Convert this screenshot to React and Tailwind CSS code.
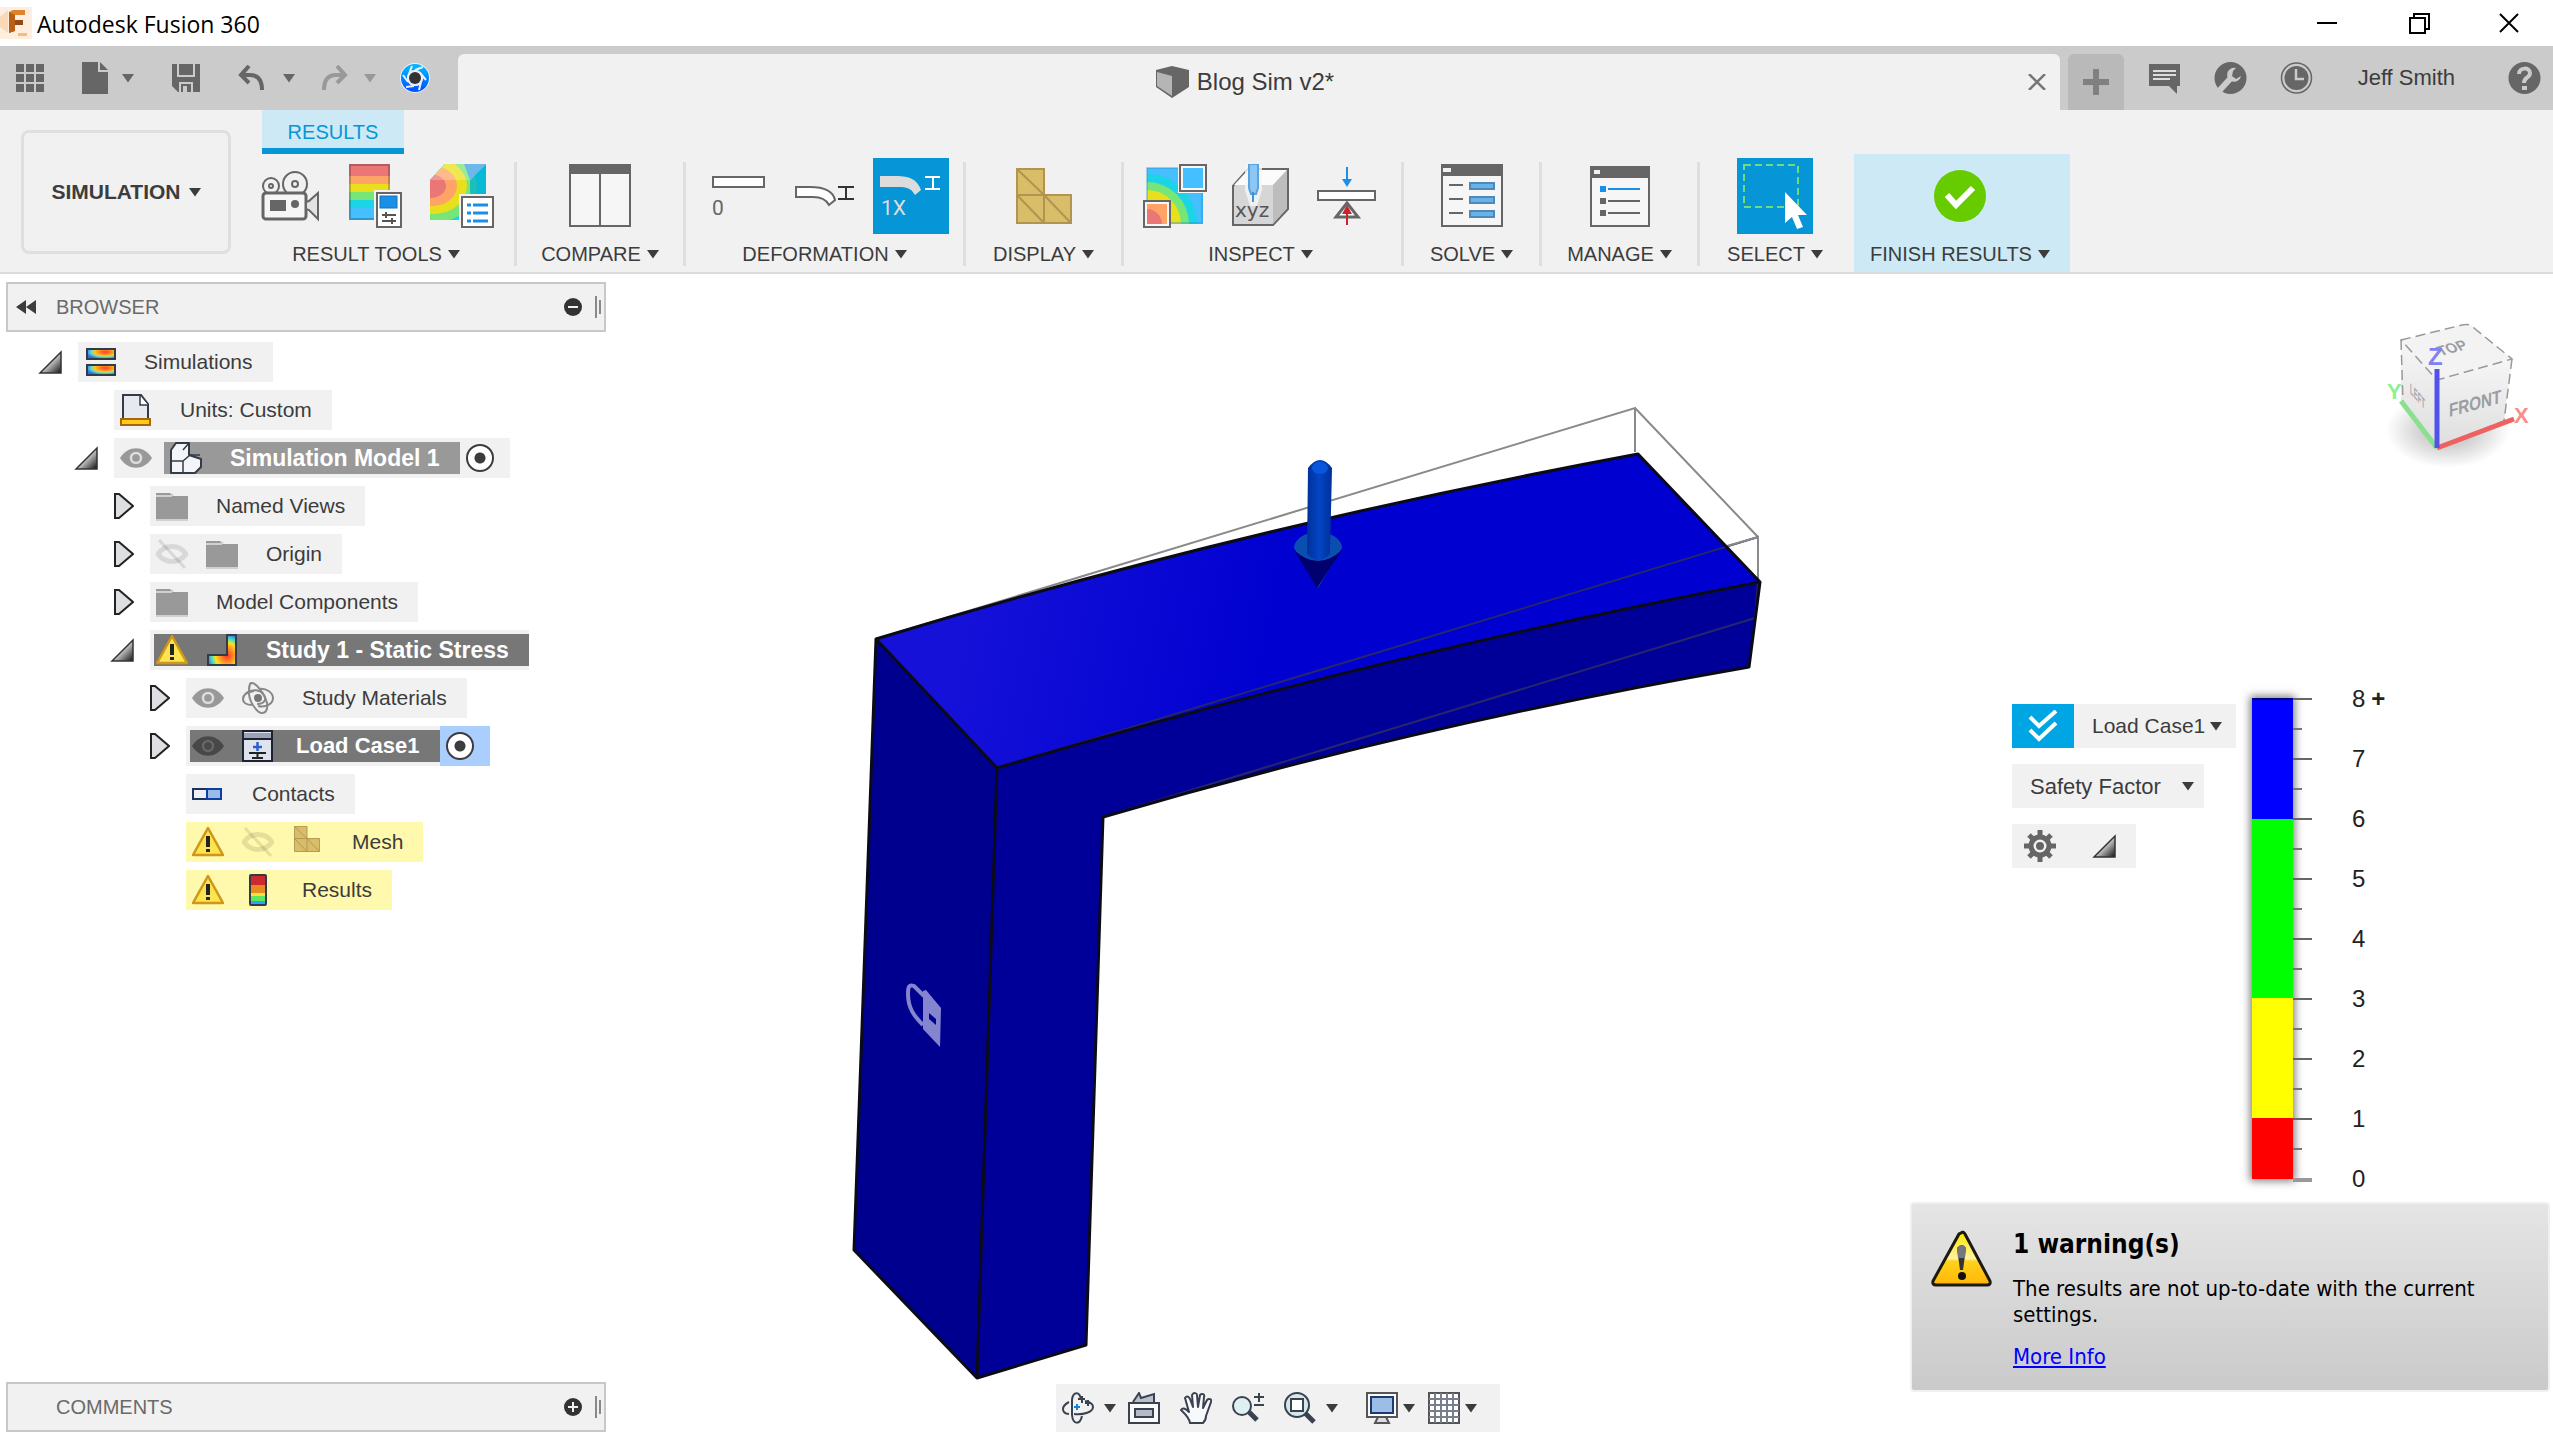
import React from 'react';

const Caret = ({ className = 'text-[#3c3c3c]' }) => (
  <svg className={`shrink-0 ${className}`} width="12" height="10" viewBox="0 0 12 10" fill="currentColor" aria-hidden="true">
    <path d="M0 1h12L6 9.500z" />
  </svg>
);

/* ---------- title bar ---------- */

const TitleBar = () => (
  <header className="flex h-[46px] items-center justify-between bg-white font-['Open_Sans',sans-serif]">
    <div className="flex items-center gap-[5px]">
      <svg width="32" height="32" viewBox="0 0 32 32" aria-hidden="true">
        <rect width="32" height="32" fill="#fdeee0" />
        <path d="M0 10L8 3v23l-8-6z" fill="#f9d9b8" />
        <path d="M9 5l4-2h12v5H15v5h8v5h-8v6l-6 2z" fill="#e0812b" />
        <path d="M9 5l6 3v16l-6 2z" fill="#b85f17" />
        <path d="M15 13h8v5h-8z" fill="#8f4a17" />
        <path d="M18 26h9v3h-9z" fill="#fbb97a" />
      </svg>
      <h1 className="pt-[2px] text-[23px] leading-[44px] text-black">Autodesk Fusion 360</h1>
    </div>
    <div className="flex h-full">
      <button type="button" aria-label="Minimize" className="flex w-[92px] items-center justify-center">
        <svg width="20" height="20" viewBox="0 0 20 20"><path d="M0 10h20" stroke="#000" strokeWidth="2" /></svg>
      </button>
      <button type="button" aria-label="Restore" className="flex w-[92px] items-center justify-center">
        <svg width="21" height="21" viewBox="0 0 21 21" fill="none" stroke="#000" strokeWidth="2">
          <path d="M1 5h15v15H1zM5 5V1h15v15h-4" />
        </svg>
      </button>
      <button type="button" aria-label="Close" className="flex w-[88px] items-center justify-center">
        <svg width="20" height="20" viewBox="0 0 20 20"><path d="M1 1l18 18M19 1L1 19" stroke="#000" strokeWidth="2" /></svg>
      </button>
    </div>
  </header>
);

/* ---------- quick access + document tab ---------- */

const QuickAccess = () => (
  <div className="flex w-[458px] items-center pl-4 text-[#666]">
    <button type="button" aria-label="Data panel" className="mr-[38px]">
      <svg width="28" height="28" viewBox="0 0 28 28" fill="currentColor">
        <path d="M0 0h8v8H0zM10 0h8v8h-8zM20 0h8v8h-8zM0 10h8v8H0zM10 10h8v8h-8zM20 10h8v8h-8zM0 20h8v8H0zM10 20h8v8h-8zM20 20h8v8h-8z" />
      </svg>
    </button>
    <button type="button" aria-label="File" className="mr-[38px] flex items-center gap-[14px]">
      <svg width="26" height="32" viewBox="0 0 26 32" fill="currentColor">
        <path d="M0 0h16v10h10v22H0zM18 0l8 8h-8z" />
      </svg>
      <Caret className="text-[#666]" />
    </button>
    <button type="button" aria-label="Save" className="mr-[38px]">
      <svg width="28" height="28" viewBox="0 0 28 28">
        <path d="M0 0h28v28H6l-6-6z" fill="currentColor" />
        <path d="M6 0v12h16V0M8 28v-9h12v9" fill="none" stroke="#cbcbcb" strokeWidth="2" />
        <path d="M11 22h4v6h-4z" fill="#cbcbcb" />
      </svg>
    </button>
    <button type="button" aria-label="Undo" className="mr-[26px] flex items-center gap-[18px]">
      <svg width="27" height="26" viewBox="0 0 27 26" fill="none" stroke="currentColor" strokeWidth="4">
        <path d="M11 1L3 10l8 8M3 10h9c8 0 12 5 12 15" />
      </svg>
      <Caret className="text-[#666]" />
    </button>
    <button type="button" aria-label="Redo" className="mr-6 flex items-center gap-4 text-[#999]">
      <svg width="27" height="26" viewBox="0 0 27 26" fill="none" stroke="currentColor" strokeWidth="4">
        <path d="M16 1l8 9-8 8M24 10h-9C7 10 3 15 3 25" />
      </svg>
      <Caret className="text-[#999]" />
    </button>
    <button type="button" aria-label="Job status">
      <svg width="30" height="32" viewBox="0 0 30 32">
        <defs>
          <linearGradient id="ring" x1="0" y1="0" x2="0" y2="1">
            <stop offset="0" stopColor="#00b4ff" />
            <stop offset="1" stopColor="#0055ff" />
          </linearGradient>
        </defs>
        <circle cx="15" cy="16" r="15" fill="#e6f2fb" />
        <circle cx="15" cy="16" r="11" fill="none" stroke="url(#ring)" strokeWidth="6" />
        <g stroke="#e6f2fb" strokeWidth="2">
          <path d="M15 8l8-3M21 12l5 6M21 20l-2 8M14 24l-8 1M8 20l-5-7M9 12l3-8" />
        </g>
        <circle cx="15" cy="16" r="8" fill="#e6f2fb" />
        <circle cx="15" cy="16" r="6" fill="#333" />
      </svg>
    </button>
  </div>
);

const TabBar = () => (
  <div className="flex h-16 bg-[#cbcbcb] font-['Liberation_Sans',Arial,sans-serif]">
    <QuickAccess />
    <div className="relative mt-2 flex flex-1 items-center justify-center rounded-t-md bg-[#f1f1f1]">
      <div className="-ml-7 flex items-center gap-2">
        <svg width="33" height="32" viewBox="0 0 33 32">
          <path d="M0 4L16 0l17 4v17L16 32 0 21z" fill="#666" />
          <path d="M1 6l15 4v20L1 20z" fill="#b3b6b5" />
        </svg>
        <span className="text-[24px] leading-8 text-[#3c3c3c]">Blog Sim v2*</span>
      </div>
      <button type="button" aria-label="Close document" className="absolute right-[14px] top-5">
        <svg width="18" height="16" viewBox="0 0 18 16"><path d="M1 0l16 16M17 0L1 16" stroke="#777" strokeWidth="2.500" /></svg>
      </button>
    </div>
    <button type="button" aria-label="New document" className="ml-2 mt-2 flex w-14 items-center justify-center rounded-t-md bg-[#b9b9b9]">
      <svg width="26" height="26" viewBox="0 0 26 26"><path d="M13 0v26M0 13h26" stroke="#808080" strokeWidth="6" /></svg>
    </button>
    <div className="flex w-[429px] items-center justify-between pl-6 pr-3 text-[#666]">
      <button type="button" aria-label="Notifications">
        <svg width="33" height="32" viewBox="0 0 33 32">
          <path d="M1 2h31v22h-3v8l-8-8H1z" fill="currentColor" />
          <path d="M5 9h23M5 13h23M5 17h17" stroke="#dcdcdc" strokeWidth="2" />
        </svg>
      </button>
      <button type="button" aria-label="Extensions">
        <svg width="33" height="32" viewBox="0 0 33 32">
          <circle cx="16.500" cy="16" r="16" fill="currentColor" />
          <path d="M5 29l11-12" stroke="#cbcbcb" strokeWidth="6" />
          <path d="M22 6a7 7 0 1 0 5 8l-5 3-4-3 1-5z" fill="#cbcbcb" />
        </svg>
      </button>
      <button type="button" aria-label="Recent">
        <svg width="33" height="32" viewBox="0 0 33 32">
          <circle cx="16.500" cy="16" r="15" fill="#cbcbcb" stroke="currentColor" strokeWidth="1.500" />
          <circle cx="16.500" cy="16" r="12" fill="currentColor" />
          <path d="M16 7v10h8" fill="none" stroke="#cbcbcb" strokeWidth="2.500" />
        </svg>
      </button>
      <a href="#account" className="ml-3 mr-5 text-[22px] leading-8 text-[#3c3c3c]">Jeff Smith</a>
      <button type="button" aria-label="Help">
        <svg width="33" height="32" viewBox="0 0 33 32">
          <circle cx="16.500" cy="16" r="16" fill="currentColor" />
          <path d="M11 12c0-7 11-7 11-1 0 5-6 4-6 10" fill="none" stroke="#cbcbcb" strokeWidth="4" />
          <path d="M14 24h5v4h-5z" fill="#cbcbcb" />
        </svg>
      </button>
    </div>
  </div>
);

/* ---------- ribbon icons ---------- */

const CameraIcon = () => (
  <svg width="58" height="64" viewBox="0 0 58 64" fill="none" stroke="#666" strokeWidth="2">
    <circle cx="10" cy="22" r="8" /><circle cx="10" cy="22" r="2" />
    <circle cx="34" cy="20" r="12" /><circle cx="34" cy="20" r="3" />
    <rect x="2" y="29" width="43" height="26" rx="3" fill="#f6f6f6" strokeWidth="3" />
    <path d="M45 38l3-1 9-8v26l-9-9-3-1z" fill="#e2e2e2" />
    <rect x="9" y="36" width="16" height="11" fill="#666" stroke="none" />
    <circle cx="34" cy="40" r="4" fill="#666" stroke="none" />
  </svg>
);

const LegendIcon = () => (
  <svg width="54" height="64" viewBox="0 0 54 64">
    <rect width="41" height="12" fill="#eb7676" />
    <rect y="12" width="41" height="8" fill="#ffa366" />
    <rect y="20" width="41" height="8" fill="#e8e01c" />
    <rect y="28" width="41" height="8" fill="#76e676" />
    <rect y="36" width="41" height="8" fill="#1cd4e6" />
    <rect y="44" width="41" height="12" fill="#45bfff" />
    <rect x="1" y="1" width="39" height="54" fill="none" stroke="#000" strokeOpacity=".22" strokeWidth="2" />
    <rect x="25" y="26" width="29" height="38" fill="#f1f1f1" />
    <rect x="28" y="29" width="24" height="34" fill="#fff" stroke="#666" strokeWidth="2" />
    <rect x="31" y="32" width="17" height="12" fill="#1a8fe8" stroke="#1473bd" />
    <path d="M33 51h14M33 57h14M37 48v6M43 54v6" stroke="#555" strokeWidth="2" />
  </svg>
);

const SurfaceIcon = () => (
  <svg width="64" height="64" viewBox="0 0 64 64">
    <clipPath id="surf"><path d="M0 16L15 0h41v40L40 56H0z" /></clipPath>
    <g clipPath="url(#surf)">
      <rect width="56" height="56" fill="#1cd4e6" />
      <ellipse cx="6" cy="22" rx="41" ry="36" fill="#76e676" />
      <ellipse cx="4" cy="22" rx="33" ry="28" fill="#e8e01c" />
      <ellipse cx="2" cy="22" rx="25" ry="20" fill="#ffa366" />
      <ellipse cx="0" cy="22" rx="16" ry="12" fill="#eb7676" />
      <path d="M40 16L56 0v56H40z" fill="#00b0cf" fillOpacity=".75" />
      <path d="M0 16L15 0h41L40 16z" fill="#fff" fillOpacity=".25" />
      <path d="M56 0L40 16 34 0z" fill="#6db8ea" />
    </g>
    <rect x="29" y="30" width="35" height="34" fill="#f1f1f1" />
    <rect x="32" y="33" width="31" height="30" fill="#fff" stroke="#666" strokeWidth="2" />
    <path d="M43 41h15M43 49h15M43 57h15M37 41h4M37 49h4M37 57h4" stroke="#1a8fe8" strokeWidth="3" />
  </svg>
);

const CompareIcon = () => (
  <svg width="62" height="64" viewBox="0 0 62 64">
    <rect x="1" y="1" width="60" height="61" fill="#f6f6f6" stroke="#666" strokeWidth="2" />
    <path d="M0 0h62v10H0zM30 10h2v52h-2z" fill="#666" />
  </svg>
);

const UndeformedIcon = () => (
  <svg width="54" height="64" viewBox="0 0 54 64">
    <rect x="1" y="13" width="51" height="10" fill="#fff" stroke="#666" strokeWidth="2" />
    <text x="0" y="51" fontSize="21" fill="#666" fontFamily="Roboto, sans-serif">0</text>
  </svg>
);

const DeformedIcon = () => (
  <svg width="62" height="64" viewBox="0 0 62 64" fill="none" stroke="#666" strokeWidth="2">
    <path d="M2 23h14c14 0 23 4 25 13l-6 5c-3-6-8-8-16-8H2z" fill="#fff" />
    <path d="M44 23h16M44 35h16M52 23v12" stroke="#333" />
  </svg>
);

const ActualIcon = () => (
  <svg width="64" height="64" viewBox="0 0 64 64">
    <path d="M1 12h17c12 0 20 3 24 14l-6 5c-4-7-8-8-17-8H1z" fill="#dcdcdc" />
    <path d="M46 13h15M46 25h15M54 13v12" stroke="#fff" strokeWidth="2" />
    <text x="2" y="51" fontSize="21" fill="#dcdcdc" fontFamily="Roboto, sans-serif">1X</text>
  </svg>
);

const MeshIcon = ({ size = 56 }) => (
  <svg width={size} height={size} viewBox="0 0 56 56" fill="#d9bd69" stroke="#b09550" strokeWidth="2">
    <path d="M1 1h27v26h27v28H1z" />
    <path d="M1 27h27v28M1 1l27 26M1 27l27 28M28 27l27 28" />
  </svg>
);

const ProbeAreaIcon = () => (
  <svg width="64" height="64" viewBox="0 0 64 64">
    <clipPath id="area"><rect x="4" y="4" width="56" height="56" /></clipPath>
    <g clipPath="url(#area)">
      <rect width="64" height="64" fill="#45bfff" />
      <circle cx="4" cy="60" r="50" fill="#1cd4e6" />
      <circle cx="4" cy="60" r="42" fill="#76e676" />
      <circle cx="4" cy="60" r="34" fill="#e8e01c" />
    </g>
    <rect x="4" y="4" width="55" height="55" fill="none" stroke="#2590cc" strokeOpacity=".5" strokeWidth="1.500" />
    <rect x="35" y="0" width="29" height="29" fill="#f6f6f6" />
    <rect x="37" y="1" width="26" height="26" fill="#f6f6f6" stroke="#666" strokeWidth="2" />
    <rect x="40" y="4" width="20" height="20" fill="#45bfff" />
    <rect x="1" y="37" width="26" height="26" fill="#f6f6f6" stroke="#666" strokeWidth="2" />
    <rect x="4" y="40" width="20" height="20" fill="#ffa366" />
    <path d="M4 60V45c8 0 15 7 15 15z" fill="#eb7676" />
  </svg>
);

const PointIcon = () => (
  <svg width="58" height="64" viewBox="0 0 58 64">
    <path d="M1 22L16 5h40v40L41 61H1z" fill="#d6d6d6" stroke="#666" strokeWidth="2" />
    <path d="M2 21L16 6h39L41 21z" fill="#fbfbfb" />
    <path d="M41 21L55 6v38L41 60z" fill="#bdbdbd" />
    <path d="M13 0h17v26l-5 16h-7l-5-16z" fill="#f6f6f6" fillOpacity=".8" />
    <path d="M17 0h9v24l-2 6h-5l-2-6z" fill="#8cc6f5" stroke="#5aa3dc" strokeWidth="2" />
    <path d="M21 28v10" stroke="#3f93d6" strokeWidth="2" />
    <text x="3" y="53" fontSize="20" fill="#555" fontFamily="DejaVu Sans, sans-serif">xyz</text>
  </svg>
);

const ReactionIcon = () => (
  <svg width="60" height="64" viewBox="0 0 60 64">
    <rect x="1" y="27" width="57" height="9" fill="#fff" stroke="#666" strokeWidth="2" />
    <path d="M30 39l11 14H19z" fill="#fff" stroke="#666" strokeWidth="3" />
    <path d="M30 3v14" stroke="#1a8fe8" strokeWidth="2" /><path d="M25 15h10l-5 8z" fill="#1a8fe8" />
    <path d="M30 47v14" stroke="#cc2229" strokeWidth="2" /><path d="M25 50h10l-5-9z" fill="#cc2229" />
  </svg>
);

const SolveIcon = () => (
  <svg width="62" height="64" viewBox="0 0 62 64">
    <rect x="1" y="1" width="60" height="61" fill="#f6f6f6" stroke="#666" strokeWidth="2" />
    <path d="M0 0h62v12H0z" fill="#666" />
    <path d="M2 4h8v4H2z" fill="#f1f1f1" />
    <path d="M8 21h14M8 35h14M8 49h14" stroke="#666" strokeWidth="2" />
    <g fill="#68b3ec" stroke="#5089b5" strokeWidth="2">
      <rect x="29" y="19" width="24" height="6" /><rect x="29" y="33" width="24" height="6" /><rect x="29" y="47" width="24" height="6" />
    </g>
  </svg>
);

const ManageIcon = () => (
  <svg width="60" height="64" viewBox="0 0 60 64">
    <rect x="1" y="3" width="58" height="59" fill="#f6f6f6" stroke="#666" strokeWidth="2" />
    <path d="M0 2h60v12H0z" fill="#666" />
    <path d="M4 6h6v4H4z" fill="#f1f1f1" />
    <path d="M18 25h32" stroke="#1a8fe8" strokeWidth="2" /><path d="M10 22h6v6h-6z" fill="#1a8fe8" />
    <path d="M18 37h32M18 49h32" stroke="#666" strokeWidth="2" /><path d="M10 34h6v6h-6zM10 46h6v6h-6z" fill="#666" />
  </svg>
);

const SelectIcon = () => (
  <svg width="68" height="68" viewBox="0 0 68 68">
    <path d="M3 3h54v42H3z" fill="none" stroke="#6fdc7c" strokeWidth="2" strokeDasharray="7 4" />
    <path d="M44 30v31l7-6 5 12 6-2-5-12h9z" fill="#fff" />
  </svg>
);

const FinishIcon = () => (
  <svg width="52" height="52" viewBox="0 0 52 52">
    <circle cx="26" cy="26" r="26" fill="#66cc00" />
    <path d="M13 25l9 10 17-17" fill="none" stroke="#fff" strokeWidth="6" />
  </svg>
);

const ribbonGroups = [
  { name: 'RESULT TOOLS', width: 'w-[260px] mr-2', tools: [['Animate', CameraIcon], ['Legend options', LegendIcon], ['Surface results', SurfaceIcon]] },
  { name: 'COMPARE', width: 'w-[166px]', tools: [['Compare', CompareIcon]] },
  { name: 'DEFORMATION', width: 'w-[277px]', tools: [['Undeformed', UndeformedIcon], ['Adjusted', DeformedIcon], ['Actual', ActualIcon, true]] },
  { name: 'DISPLAY', width: 'w-[155px]', tools: [['Mesh', MeshIcon]] },
  { name: 'INSPECT', width: 'w-[273px] mr-1', tools: [['Surface probes', ProbeAreaIcon], ['Point probes', PointIcon], ['Reactions', ReactionIcon]] },
  { name: 'SOLVE', width: 'w-[135px]', tools: [['Solve', SolveIcon]] },
  { name: 'MANAGE', width: 'w-[155px]', tools: [['Manage', ManageIcon]] },
  { name: 'SELECT', width: 'w-[150px] mr-1', tools: [['Select', SelectIcon, true]] },
  { name: 'FINISH RESULTS', width: 'w-[216px] pr-1', tools: [['Finish results', FinishIcon]], finish: true },
];

const Ribbon = () => (
  <div className="flex h-[164px] border-b-2 border-[#dcdcdc] bg-[#f1f1f1] pl-[21px] font-['Liberation_Sans',Arial,sans-serif]">
    <button
      type="button"
      className="mt-5 flex h-[124px] w-[210px] items-center justify-center gap-2 rounded-lg border-3 border-[#dfdfdf] text-[21px] font-bold text-[#3c3c3c]"
    >
      SIMULATION
      <Caret />
    </button>
    <div className="ml-[15px] flex flex-1 flex-col">
      <div className="flex h-11 pl-4">
        <button type="button" className="w-[142px] border-b-6 border-[#0696d7] bg-[#cce9f5] pt-[6px] text-[20px] leading-8 text-[#0696d7]">
          RESULTS
        </button>
      </div>
      <div className="flex">
        {ribbonGroups.map((group, index) => (
          <React.Fragment key={group.name}>
            {index > 0 && !group.finish && <div className="mt-2 h-[104px] w-[3px] bg-[#dfdfdf]" />}
            <section className={`flex h-[118px] flex-col items-center ${group.width} ${group.finish ? 'bg-[#cce9f5]' : ''}`}>
              <div className="mt-1 flex h-[76px] gap-[10px]">
                {group.tools.map(([label, Icon, active]) => (
                  <button
                    key={label}
                    type="button"
                    aria-label={label}
                    className={`flex w-[76px] items-center justify-center ${active ? 'bg-[#0696d7]' : ''}`}
                  >
                    <Icon />
                  </button>
                ))}
              </div>
              <button type="button" className="mt-2 flex items-center gap-[6px] text-[20px] leading-6 text-[#3c3c3c]">
                {group.name}
                <Caret />
              </button>
            </section>
          </React.Fragment>
        ))}
      </div>
    </div>
  </div>
);

/* ---------- browser tree ---------- */

const Expanded = () => (
  <svg width="24" height="24" viewBox="0 0 24 24">
    <defs>
      <linearGradient id="tri" x1="0" y1="0" x2="1" y2="1">
        <stop offset=".35" stopColor="#fff" />
        <stop offset="1" stopColor="#111" />
      </linearGradient>
    </defs>
    <path d="M2 23L23 2v21z" fill="url(#tri)" stroke="#333" strokeWidth="1.500" />
  </svg>
);

const Collapsed = () => (
  <svg width="20" height="26" viewBox="0 0 20 26">
    <path d="M1 1h4l14 12L5 25H1z" fill="#dedfe2" stroke="#222" strokeWidth="2" />
  </svg>
);

const Eye = ({ color = '#999', hole = '#ddd' }) => (
  <svg width="32" height="32" viewBox="0 0 32 32">
    <path d="M0 16C8 3 24 3 32 16 24 29 8 29 0 16z" fill={color} />
    <circle cx="16" cy="16" r="5" fill={color} stroke={hole} strokeWidth="2.500" />
  </svg>
);

const EyeOff = () => (
  <svg width="32" height="32" viewBox="0 0 32 32" fill="none" stroke="#000" strokeOpacity=".1">
    <path d="M2 16C9 6 23 6 30 16 23 26 9 26 2 16z" strokeWidth="5" />
    <path d="M3 2l26 28" strokeWidth="3" />
  </svg>
);

const Folder = () => (
  <svg width="32" height="32" viewBox="0 0 32 32">
    <path d="M0 3h14l3 3h15v23H0z" fill="#999" />
    <path d="M0 6h15l2-2M0 30h32" fill="none" stroke="#d0d0d0" strokeWidth="2" />
  </svg>
);

const Warning = () => (
  <svg width="32" height="32" viewBox="0 0 32 32">
    <path d="M16 2L31 29H1z" fill="#fbe44f" stroke="#cf9717" strokeWidth="2.500" strokeLinejoin="round" />
    <path d="M14 10h4v11h-4zM14 23h4v3h-4z" fill="#222" />
  </svg>
);

const SimulationsIcon = () => (
  <svg width="32" height="32" viewBox="0 0 32 32">
    <defs>
      <radialGradient id="rb1" cx=".65" cy=".3" r=".7">
        <stop offset="0" stopColor="#ff3b3b" />
        <stop offset=".3" stopColor="#ff8420" />
        <stop offset=".55" stopColor="#ffc81c" />
        <stop offset=".72" stopColor="#60e0c8" />
        <stop offset="1" stopColor="#2f6cf0" />
      </radialGradient>
    </defs>
    <g fill="url(#rb1)" stroke="#333b48" strokeWidth="2">
      <rect x="3" y="3" width="28" height="10" /><rect x="3" y="19" width="28" height="10" />
    </g>
  </svg>
);

const UnitsIcon = () => (
  <svg width="32" height="32" viewBox="0 0 32 32">
    <path d="M3 26V1h18l7 9v16" fill="#e6e9f0" stroke="#333b48" strokeWidth="2" />
    <path d="M20 2v9h8" fill="#fff" stroke="#333b48" strokeWidth="1.500" />
    <rect x="1" y="25" width="29" height="6" fill="#ffca1c" stroke="#a8650a" strokeWidth="2" />
  </svg>
);

const ModelIcon = () => (
  <svg width="32" height="32" viewBox="0 0 32 32" fill="#f4f5f8" stroke="#333b48" strokeWidth="2" strokeLinejoin="round">
    <path d="M1 8l5-7h13v12l6 2 6 2v8l-6 6H1z" />
    <path d="M1 19h12v12M13 19l7-6h10M19 1l-6 7" strokeWidth="1.500" fill="none" />
  </svg>
);

const StudyIcon = () => (
  <svg width="32" height="32" viewBox="0 0 32 32">
    <defs>
      <radialGradient id="rb2" cx=".68" cy=".68" r=".7">
        <stop offset="0" stopColor="#ff3030" />
        <stop offset=".35" stopColor="#ff9420" />
        <stop offset=".6" stopColor="#ffe11c" />
        <stop offset=".78" stopColor="#4fe0b8" />
        <stop offset="1" stopColor="#2f7cf0" />
      </radialGradient>
    </defs>
    <path d="M21 1h9v30H2V21h19z" fill="url(#rb2)" stroke="#333b48" strokeWidth="2" />
  </svg>
);

const MaterialsIcon = () => (
  <svg width="32" height="32" viewBox="0 0 32 32" fill="none" stroke="#888" strokeWidth="2">
    <path d="M17 7c8-1 14 4 14 9s-6 10-15 8" />
    <path d="M12 9C5 10 1 13 1 17s4 6 9 6" />
    <path d="M9 1c5-1 14 12 16 20 1 6-1 10-5 10S8 22 7 12C7 6 7 2 9 1z" />
    <path d="M4 11c6-4 14-4 18 2 3 5 0 9-7 9" />
    <circle cx="16" cy="16" r="4" fill="#777" stroke="none" />
  </svg>
);

const LoadCaseIcon = () => (
  <svg width="32" height="32" viewBox="0 0 32 32">
    <rect x="1" y="1" width="29" height="30" fill="#dfe3ee" stroke="#1c2230" strokeWidth="2" />
    <path d="M2 3h27v5H2z" fill="#9aa3b8" />
    <path d="M2 9h27" stroke="#1c2230" strokeWidth="2" />
    <path d="M15.500 12v9M11 17h9" stroke="#2a62cc" strokeWidth="2.500" />
    <path d="M7 23h17M15.500 23v4M10 28h11" stroke="#222" strokeWidth="2" />
  </svg>
);

const ContactsIcon = () => (
  <svg width="32" height="32" viewBox="0 0 32 32" strokeWidth="2">
    <rect x="1" y="11" width="14" height="10" fill="#eef0f4" stroke="#1c3360" />
    <rect x="15" y="11" width="14" height="10" fill="#9bbbe6" stroke="#0c3fa8" />
  </svg>
);

const ResultsIcon = () => (
  <svg width="32" height="32" viewBox="0 0 32 32">
    <path d="M8 1h16v10H8z" fill="#cc2a2f" />
    <path d="M8 11h16v8H8z" fill="#e58b22" />
    <path d="M8 19h16v3H8z" fill="#ffe13a" />
    <path d="M8 22h16v5H8z" fill="#5fe65f" />
    <path d="M8 27h16v4H8z" fill="#22a9f5" />
    <rect x="8" y="1" width="16" height="30" rx="1" fill="none" stroke="#333b48" strokeWidth="2" />
  </svg>
);

const TreeMesh = () => (
  <span className="w-8 pl-[2px]"><MeshIcon size={26} /></span>
);

const DarkEye = () => <Eye color="#484848" hole="#666" />;

const treeRows = [
  { label: 'Simulations', indent: 'pl-[38px]', open: true, icons: [SimulationsIcon] },
  { label: 'Units: Custom', indent: 'pl-[74px]', icons: [UnitsIcon] },
  { label: 'Simulation Model 1', indent: 'pl-[74px]', open: true, lead: Eye, icons: [ModelIcon], block: 'bg-[#999]', text: 'pl-7 text-[23px]', radio: 'bg-[#f1f1f1]' },
  { label: 'Named Views', indent: 'pl-[110px]', open: false, icons: [Folder] },
  { label: 'Origin', indent: 'pl-[110px]', open: false, icons: [EyeOff, Folder] },
  { label: 'Model Components', indent: 'pl-[110px]', open: false, icons: [Folder] },
  { label: 'Study 1 - Static Stress', indent: 'pl-[110px]', open: true, icons: [Warning, StudyIcon], block: 'bg-[#777]', text: 'pl-7 text-[23px]' },
  { label: 'Study Materials', indent: 'pl-[146px]', open: false, icons: [Eye, MaterialsIcon] },
  { label: 'Load Case1', indent: 'pl-[146px]', open: false, icons: [DarkEye, LoadCaseIcon], block: 'bg-[#777]', text: 'pl-[22px] text-[22px]', radio: 'bg-[#aacfff]' },
  { label: 'Contacts', indent: 'pl-[146px]', icons: [ContactsIcon] },
  { label: 'Mesh', indent: 'pl-[146px]', icons: [Warning, EyeOff, TreeMesh], warn: true },
  { label: 'Results', indent: 'pl-[146px]', icons: [Warning, ResultsIcon], warn: true },
];

const TreeRow = ({ row, id }) => {
  const Lead = row.lead;
  const Label = row.radio ? 'label' : 'span';
  return (
    <li className={`flex h-10 items-center ${row.indent}`}>
      <span className="flex w-10 shrink-0 items-center">
        {row.open === true && <button type="button" aria-label="Collapse"><Expanded /></button>}
        {row.open === false && <button type="button" aria-label="Expand" className="ml-1"><Collapsed /></button>}
      </span>
      <div className={`flex h-10 items-center ${row.warn ? 'bg-[#fff9ad]' : 'bg-[#f1f1f1]'}`}>
        {Lead && <span className="ml-[6px] mr-3"><Lead /></span>}
        <div className={`flex items-center ${row.block ? `h-8 ${row.block} ${Lead ? 'pl-[6px]' : 'ml-1 pl-[2px]'}` : 'pl-[6px]'}`}>
          <span className="flex gap-[18px]">
            {row.icons.map((Icon, i) => <Icon key={i} />)}
          </span>
          <Label
            htmlFor={row.radio ? id : undefined}
            className={`whitespace-nowrap pr-5 leading-8 ${row.block ? `font-bold text-white ${row.text}` : 'pl-7 text-[21px] text-[#3c3c3c]'}`}
          >
            {row.label}
          </Label>
        </div>
        {row.radio && (
          <span className={`flex h-10 w-[50px] items-center pl-[6px] ${row.radio}`}>
            <input
              id={id}
              type="radio"
              name={id}
              defaultChecked
              className="m-0 size-7 appearance-none rounded-full border-2 border-[#3c3c3c] bg-[radial-gradient(circle,#3c3c3c_0_5px,#fff_6px)]"
            />
          </span>
        )}
      </div>
    </li>
  );
};

const PanelHeader = ({ title, collapse }) => (
  <div className="ml-[6px] flex h-[50px] items-center border-2 border-[#c8c8c8] bg-[#f1f1f1] pl-2 pr-[2px]">
    <span className="w-10">
      {collapse && (
        <button type="button" aria-label="Hide panel" className="block">
          <svg width="20" height="14" viewBox="0 0 20 14" fill="#3c3c3c"><path d="M10 0v14L0 7zM20 0v14L10 7z" /></svg>
        </button>
      )}
    </span>
    <h2 className="flex-1 text-[20px] text-[#6a6a6a]">{title}</h2>
    <button type="button" aria-label={`Toggle ${title}`} className="mr-3">
      <svg width="18" height="18" viewBox="0 0 18 18">
        <circle cx="9" cy="9" r="9" fill="#333" />
        <path d={collapse ? 'M4 9h10' : 'M4 9h10M9 4v10'} stroke="#f1f1f1" strokeWidth="2" />
      </svg>
    </button>
    <svg width="8" height="24" viewBox="0 0 8 24"><path d="M2 1v22M6 5v14" stroke="#888" strokeWidth="2" /></svg>
  </div>
);

const Browser = () => (
  <aside className="relative z-10 flex w-[606px] flex-col justify-between">
    <div className="pt-2">
      <PanelHeader title="BROWSER" collapse />
      <ul className="mt-[10px] flex flex-col gap-2">
        {treeRows.map((row, i) => <TreeRow key={row.label} row={row} id={`node-${i}`} />)}
      </ul>
    </div>
    <PanelHeader title="COMMENTS" />
  </aside>
);

/* ---------- viewport ---------- */

const Model = () => (
  <svg className="absolute left-[840px] top-[106px]" width="940" height="1010" viewBox="840 380 940 1010" fill="none">
    <defs>
      <linearGradient id="top" gradientUnits="userSpaceOnUse" x1="960" y1="640" x2="1260" y2="700">
        <stop offset="0" stopColor="#1511d9" />
        <stop offset="1" stopColor="#0000d0" />
      </linearGradient>
      <linearGradient id="shaft" x1="0" x2="1">
        <stop offset="0" stopColor="#00309c" />
        <stop offset=".5" stopColor="#0346c4" />
        <stop offset="1" stopColor="#002f98" />
      </linearGradient>
    </defs>
    <path d="M876 639L1635 408v44M1635 408l123 129v45" stroke="#8a8a8a" strokeWidth="2" />
    <path d="M876 639L997 768 977 1378 854 1250z" fill="#00008f" />
    <path d="M997 768Q1365 658 1760 582L1749 667Q1415 725 1103 817L1086 1345 977 1378z" fill="#000099" />
    <path d="M876 639Q1240 528 1638 454L1760 582Q1365 658 997 768z" fill="url(#top)" />
    <path d="M997 768L1758 537V582L1755 618M1103 817L1755 618" stroke="#26266a" strokeWidth="2" />
    <path d="M1727 546L1758 537V582" stroke="#8a8a8a" strokeWidth="2" />
    <path
      d="M876 639Q1240 528 1638 454L1760 582Q1365 658 997 768zM1760 582L1749 667Q1415 725 1103 817L1086 1345 977 1378 854 1250 876 639M997 768L977 1378"
      stroke="#0b0b18"
      strokeWidth="3"
      strokeLinejoin="round"
    />
    <path d="M1294 548a24 16 0 0 1 48 0l-24 40z" fill="#0a4fb0" />
    <path d="M1294 550q24 22 48 0l-25 38z" fill="#00006e" />
    <path d="M1308 468q12-16 24 0l-2 86q-12 12-23 0z" fill="url(#shaft)" />
    <ellipse cx="1320" cy="468" rx="8" ry="6" fill="#0a56dc" />
    <g fill="#8585cf">
      <path d="M923 991l3-1 15 18-1 39-17-18z" />
      <path d="M924 996l-10-10c-5-2-6 1-6 8 0 14 6 22 15 31" fill="none" stroke="#8585cf" strokeWidth="4" />
      <path d="M929 1013l7 6v6l-7-6z" fill="#00008f" />
    </g>
  </svg>
);

const ViewCube = () => (
  <svg className="absolute right-0 top-[18px]" width="213" height="190" viewBox="0 0 213 190" fontFamily="Liberation Sans, Arial, sans-serif">
    <defs>
      <radialGradient id="cubeShadow">
        <stop offset=".3" stopColor="#000" stopOpacity=".22" />
        <stop offset="1" stopColor="#000" stopOpacity="0" />
      </radialGradient>
      <linearGradient id="cubeSide" x1="0" y1="0" x2="0" y2="1">
        <stop offset="0" stopColor="#f6f6f6" />
        <stop offset="1" stopColor="#dedede" />
      </linearGradient>
    </defs>
    <ellipse cx="108" cy="138" rx="62" ry="38" fill="url(#cubeShadow)" />
    <path d="M61 48L97 88v68l-36-44z" fill="url(#cubeSide)" />
    <path d="M97 88l75-21-8 62-67 27z" fill="url(#cubeSide)" />
    <path d="M61 48l61-15q8-2 12 3l38 31-75 21z" fill="#f3f3f3" />
    <path d="M61 48l61-15q8-2 12 3l38 31-75 21zM61 48l2 63 34 44M172 67l-8 62-67 26" fill="none" stroke="#999" strokeWidth="1.500" strokeDasharray="10 5" />
    <path d="M61 109l36 47" stroke="#8ae08f" strokeWidth="5" />
    <path d="M97 156l77-29" stroke="#ee6161" strokeWidth="5" />
    <path d="M97 77v79" stroke="#5252ea" strokeWidth="5" />
    <text transform="matrix(.8 -.22 0 1 109 125)" fontSize="19" fontWeight="bold" fill="#9a9da1">FRONT</text>
    <text transform="matrix(.8 -.22 .5 .75 101 64)" fontSize="17" fontWeight="bold" fill="#9a9da1">TOP</text>
    <text transform="matrix(.4 .45 0 1 70 101)" fontSize="15" fontWeight="bold" fill="#a5a7aa">LEFT</text>
    <text x="88" y="73" fontSize="24" fontWeight="bold" fill="#8181f2">Z</text>
    <text x="47" y="107" fontSize="22" fontWeight="bold" fill="#8ff095">Y</text>
    <text x="174" y="131" fontSize="22" fontWeight="bold" fill="#f98d8d">X</text>
  </svg>
);

const ResultControls = () => (
  <form className="absolute right-[317px] top-[430px] flex w-56 flex-col items-start gap-4 text-[21px] text-[#3c3c3c]">
    <div className="flex h-11 w-full bg-[#f1f1f1]">
      <button type="button" aria-label="Load cases" className="flex w-[62px] items-center justify-center bg-[#00a6e4]">
        <svg width="30" height="32" viewBox="0 0 30 32" fill="none" stroke="#fff" strokeWidth="4">
          <path d="M2 7l9 9L28 1M2 20l9 9 17-16" />
        </svg>
      </button>
      <div className="relative flex flex-1 items-center">
        <select aria-label="Load case" className="h-full w-full appearance-none bg-transparent pl-[18px] outline-none" defaultValue="Load Case1">
          <option>Load Case1</option>
        </select>
        <span className="pointer-events-none absolute right-[14px]"><Caret /></span>
      </div>
    </div>
    <div className="relative flex h-11 w-48 items-center bg-[#f1f1f1]">
      <select aria-label="Result type" className="h-full w-full appearance-none bg-transparent pl-[18px] text-[22px] outline-none" defaultValue="Safety Factor">
        <option>Safety Factor</option>
      </select>
      <span className="pointer-events-none absolute right-[10px]"><Caret /></span>
    </div>
    <div className="flex h-11 w-[124px] items-center justify-between bg-[#f1f1f1] pl-3 pr-5">
      <button type="button" aria-label="Settings">
        <svg width="32" height="32" viewBox="0 0 32 32" fill="none" stroke="#666">
          <circle cx="16" cy="16" r="9" strokeWidth="5" />
          <circle cx="16" cy="16" r="4" fill="#666" stroke="none" />
          <path d="M16 0v6M16 26v6M0 16h6M26 16h6M5 5l4 4M23 23l4 4M27 5l-4 4M9 23l-4 4" strokeWidth="5" />
        </svg>
      </button>
      <button type="button" aria-label="Collapse legend"><Expanded /></button>
    </div>
  </form>
);

const legendSteps = ['8', '7', '6', '5', '4', '3', '2', '1', '0'];

const Legend = () => (
  <div className="absolute right-[141px] top-[424px] flex font-['Liberation_Sans',Arial,sans-serif]">
    <div className="flex h-[481px] w-[41px] flex-col shadow-[0_0_8px_2px_rgba(0,0,0,0.5)]">
      <div className="h-[121px] border-t-2 border-[#000080] bg-[#0000ff]" />
      <div className="h-[179px] bg-[#00ff00]" />
      <div className="h-[120px] bg-[#ffff00]" />
      <div className="h-[61px] bg-[#ff0000]" />
    </div>
    <div>
      {legendSteps.map((step) => (
        <div key={step} className="flex h-[60px] flex-col">
          <div className={step === '0' ? 'h-[4px] w-[19px] bg-[#999]' : 'h-[2px] w-[19px] bg-[#666]'} />
          {step !== '0' && <div className="mt-7 h-[2px] w-[9px] bg-[#777]" />}
        </div>
      ))}
    </div>
    <div className="-mt-[29px] ml-10 w-[60px] text-[24px] leading-[60px] text-[#222]">
      {legendSteps.map((step) => (
        <div key={step}>{step}{step === '8' && <b className="ml-[6px]">+</b>}</div>
      ))}
    </div>
  </div>
);

const WarningCard = () => (
  <div className="absolute bottom-10 right-[3px] flex h-[190px] w-[640px] gap-5 rounded-sm border-2 border-[#f0f0f0] bg-linear-to-b from-[#e5e5e5] to-[#cacaca] pl-[18px] font-['DejaVu_Sans_Condensed','DejaVu_Sans',Tahoma,sans-serif]">
    <svg className="mt-[26px] shrink-0" width="63" height="58" viewBox="0 0 63 58">
      <defs>
        <linearGradient id="warnFill" x1="0" y1="0" x2="0" y2="1">
          <stop offset="0" stopColor="#ffe600" />
          <stop offset=".5" stopColor="#fff3a0" />
          <stop offset=".55" stopColor="#ffd21a" />
          <stop offset="1" stopColor="#ffb60a" />
        </linearGradient>
      </defs>
      <path d="M31 3q2-2 4 1l25 47q1 4-3 4H6q-4 0-3-4L29 4z" fill="url(#warnFill)" stroke="#1c1a10" strokeWidth="3" />
      <path d="M27 18q5-6 9 0l-3 22h-3z" fill="#333" />
      <path d="M27 18q5-6 9 0l-1 10h-7z" fill="#77767a" />
      <circle cx="32" cy="46" r="4" fill="#111" />
    </svg>
    <div className="pt-6 text-black">
      <h3 className="text-[26px] font-bold leading-8">1 warning(s)</h3>
      <p className="mt-4 w-[490px] text-[22px] leading-[26px]">The results are not up-to-date with the current settings.</p>
      <a href="#more-info" className="mt-4 inline-block text-[22px] leading-[26px] text-[#0000ff] underline">More Info</a>
    </div>
  </div>
);

const NavToolbar = () => (
  <div className="absolute bottom-0 left-[1056px] flex h-12 w-[444px] items-start bg-[#f1f1f1] pl-[6px] pt-2">
    <button type="button" aria-label="Orbit" className="flex items-center gap-[10px]">
      <svg width="32" height="32" viewBox="0 0 32 32" fill="none" stroke="#3a4250" strokeWidth="2">
        <path d="M19 8c-1-9-8-9-9 0v15c1 10 8 10 10 1M7 10c-8 4-8 11 0 12M12 22c10 1 19-2 19-7 0-3-3-5-8-6" />
        <path d="M20 4v7M16 7h7M26 8v6M23 11h6" />
        <path d="M15 12v6M12 15h6" stroke="#0a84e8" />
      </svg>
      <Caret />
    </button>
    <button type="button" aria-label="Look at" className="ml-3">
      <svg width="32" height="32" viewBox="0 0 32 32" stroke="#3a4250" strokeWidth="2">
        <path d="M5 10l6-9 2 5 13-4v8" fill="#b9c0cc" />
        <rect x="1" y="11" width="30" height="20" fill="#fafafa" /><rect x="7" y="17" width="18" height="8" fill="#b4bac6" />
      </svg>
    </button>
    <button type="button" aria-label="Pan" className="ml-5">
      <svg width="32" height="32" viewBox="0 0 32 32" fill="#f8f9fb" stroke="#3a4250" strokeWidth="2" strokeLinejoin="round">
        <path d="M10 31c-1-6-6-10-9-13 2-3 5-1 8 2L5 6c2-3 4-1 5 1l3 8-1-12c2-3 5-2 5 0l1 12 2-12c2-2 5-1 4 2l-1 11 4-8c2-2 5-1 4 2l-5 14c0 3-1 5-3 7z" />
      </svg>
    </button>
    <button type="button" aria-label="Zoom" className="ml-5">
      <svg width="32" height="32" viewBox="0 0 32 32" fill="none" stroke="#3a4250" strokeWidth="2">
        <path d="M17 20l8 8" strokeWidth="5" />
        <circle cx="10" cy="14" r="9" fill="#dff0f2" />
        <path d="M27 1v9M22 5h10M22 13h10" />
      </svg>
    </button>
    <button type="button" aria-label="Fit" className="ml-5 flex items-center gap-[10px]">
      <svg width="32" height="32" viewBox="0 0 32 32" fill="none" stroke="#3a4250" strokeWidth="2">
        <path d="M21 21l9 9" strokeWidth="5" />
        <circle cx="13" cy="13" r="12" fill="#d3e8ea" />
        <rect x="7" y="7" width="12" height="12" fill="#fff" />
      </svg>
      <Caret />
    </button>
    <button type="button" aria-label="Display settings" className="ml-7 flex items-center gap-[5px]">
      <svg width="32" height="32" viewBox="0 0 32 32" stroke="#555" strokeWidth="2">
        <path d="M12 25h8l3 6H9z" fill="#ddd" />
        <rect x="1" y="1" width="30" height="24" fill="#fafafa" /><rect x="5" y="5" width="22" height="16" fill="#9bbde6" stroke="#1c3a70" />
      </svg>
      <Caret />
    </button>
    <button type="button" aria-label="Grid and snaps" className="ml-[13px] flex items-center gap-[5px]">
      <svg width="32" height="32" viewBox="0 0 32 32" fill="none">
        <rect x="1" y="1" width="30" height="30" fill="#fff" stroke="#555" strokeWidth="2" />
        <path d="M7 1v30M13 1v30M19 1v30M25 1v30M1 7h30M1 13h30M1 19h30M1 25h30" stroke="#777f8c" strokeWidth="2" />
      </svg>
      <Caret />
    </button>
  </div>
);

const App = () => (
  <div className="flex h-screen flex-col overflow-hidden bg-white">
    <TitleBar />
    <TabBar />
    <Ribbon />
    <main className="relative flex flex-1 font-['Liberation_Sans',Arial,sans-serif]">
      <Browser />
      <Model />
      <ViewCube />
      <ResultControls />
      <Legend />
      <WarningCard />
      <NavToolbar />
    </main>
  </div>
);

export default App;
